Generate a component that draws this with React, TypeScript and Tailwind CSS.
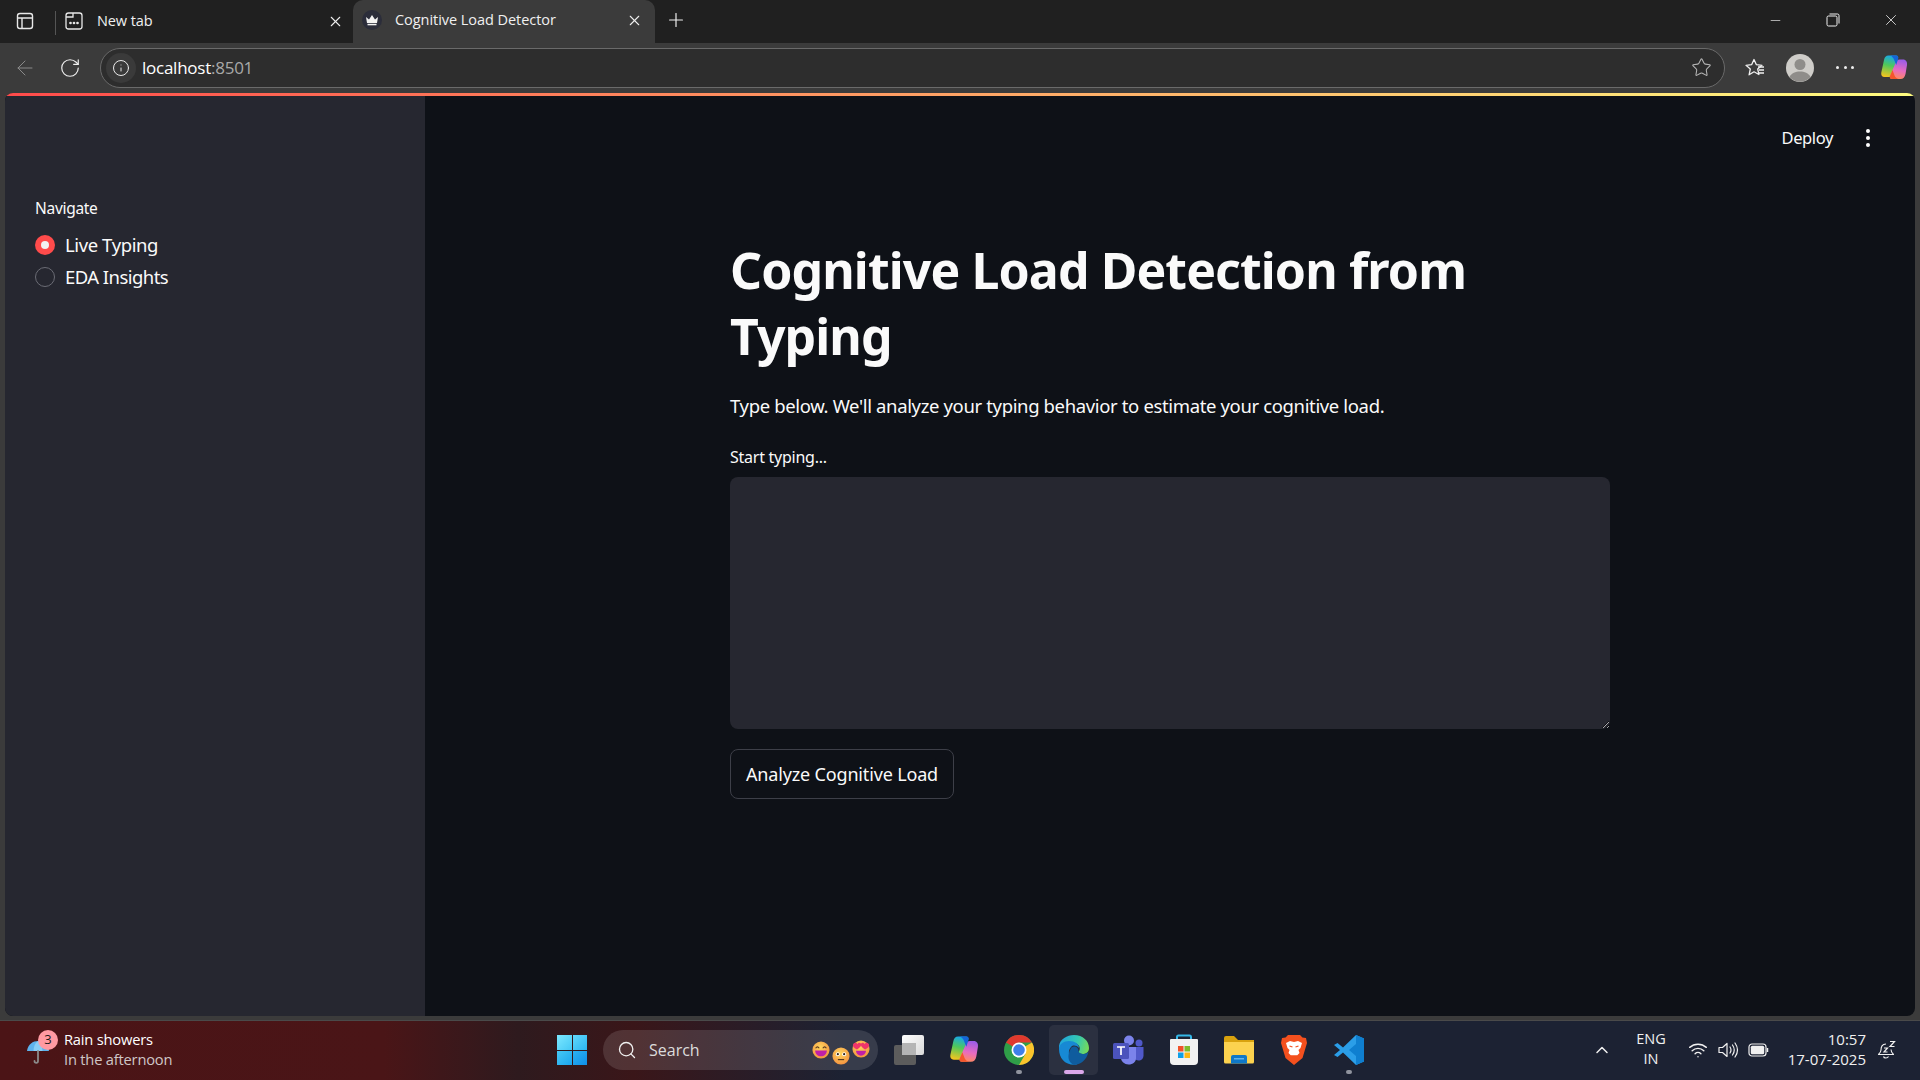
import { X, Plus, ArrowLeft, RotateCw, Info, Star, Minus, Search, ChevronUp, Wifi } from 'lucide-react'

const ui = 'font-["Open_Sans","Noto_Sans",sans-serif]'
const st = 'font-["Noto_Sans",sans-serif]'

function SidebarIcon() {
  return (
    <svg width="20" height="20" viewBox="0 0 20 20" fill="none" stroke="#e8e8e8" strokeWidth="1.4">
      <rect x="2.5" y="2.5" width="15" height="15" rx="2.5" />
      <path d="M2.5 7h15M7 7v10.5" />
    </svg>
  )
}

function NewTabIcon() {
  return (
    <svg width="20" height="20" viewBox="0 0 20 20" fill="none" stroke="#e8e8e8" strokeWidth="1.3">
      <path d="M4.5 2h11A2.5 2.5 0 0 1 18 4.500v11a2.500 2.500 0 0 1-2.500 2.500h-11A2.500 2.500 0 0 1 2 15.500v-11A2.500 2.500 0 0 1 4.500 2zM2 6h7V2" />
      <circle cx="6.500" cy="12" r=".7" fill="#e8e8e8" />
      <circle cx="10" cy="12" r=".7" fill="#e8e8e8" />
      <circle cx="13.500" cy="12" r=".7" fill="#e8e8e8" />
    </svg>
  )
}

function Crown() {
  return (
    <div className="flex h-[20px] w-[20px] items-center justify-center rounded-full bg-[#2b2d3a]">
      <svg width="14" height="12" viewBox="0 0 14 12" fill="#f2f2f2">
        <path d="M1 3l3 2.500L7 1l3 4.500L13 3l-1 6H2z" />
        <rect x="2.500" y="9.800" width="9" height="1.500" />
      </svg>
    </div>
  )
}

function Restore() {
  return (
    <svg width="14" height="14" viewBox="0 0 14 14" fill="none" stroke="#f0f0f0" strokeWidth="1">
      <rect x="1" y="3" width="10" height="10" rx="1.500" />
      <path d="M3.500 1H11.500A1.500 1.500 0 0 1 13 2.500V10.500" />
    </svg>
  )
}

function FavoritesIcon() {
  return (
    <svg width="22" height="20" viewBox="0 0 22 20" fill="none" stroke="#f0f0f0" strokeWidth="1.300" strokeLinejoin="round">
      <path d="M10 1.500l2.400 5.200 5.600.6-4.300 3.700 1.200 5.500L10 13.800l-4.900 3 1.200-5.800L2 7.300l5.600-.6z" />
      <path d="M14 9h6M15 12h5M14 15h6" />
    </svg>
  )
}

function Avatar() {
  return (
    <svg width="28" height="28" viewBox="0 0 28 28">
      <circle cx="14" cy="14" r="14" fill="#cfcdc9" />
      <circle cx="14" cy="10.500" r="5.500" fill="#8f8d8a" />
      <path d="M3.500 23c2-4 6-5.500 10.500-5.500S22.500 19 24.500 23a14 14 0 0 1-21 0z" fill="#8f8d8a" />
    </svg>
  )
}

function CopilotIcon({ size = 28, id = 'cp' }: { size?: number; id?: string }) {
  return (
    <svg width={size} height={size} viewBox="0 0 28 28">
      <defs>
        <linearGradient id={`${id}a`} x1="0.500" y1="0" x2="0.300" y2="1">
          <stop offset="0" stopColor="#18a8e8" />
          <stop offset="0.450" stopColor="#4fc85a" />
          <stop offset="1" stopColor="#f5c51e" />
        </linearGradient>
        <linearGradient id={`${id}b`} x1="0.600" y1="0" x2="0.400" y2="1">
          <stop offset="0" stopColor="#9a5ce8" />
          <stop offset="0.550" stopColor="#e86bc0" />
          <stop offset="1" stopColor="#ff8a5c" />
        </linearGradient>
      </defs>
      <path d="M8.500 1.500H16c2 0 2.500 1.500 2 3L13 20c-.7 2-2 3-4 3H4.500C2 23 .8 21 1.300 18.500L4 6c.6-3 2-4.500 4.500-4.500z" fill={`url(#${id}a)`} />
      <path d="M19.500 5.500h3.500c3 0 4.500 2.500 4 5.500l-1.500 9c-.6 3-2.300 5-5 5H12c-2 0-2.500-1.500-2-3l5.500-13c.8-2 2-3.500 4-3.500z" fill={`url(#${id}b)`} />
      <path d="M10.500 1.500H16c2 0 2.700 1.500 2.200 3l-2 6.500-2-5c-.7-2-2-3.500-3.700-4.500z" fill="#1565d8" />
      <path d="M18.500 25H12c-2 0-2.500-1.500-2-3l2.500-6 2 5.500c.7 1.800 2.300 3 4 3.500z" fill="#f4562c" />
    </svg>
  )
}

function Umbrella() {
  return (
    <svg width="24" height="30" viewBox="0 0 24 30" fill="none">
      <path d="M1 14C2 7 7 4 12 4s10 3 11 10z" fill="#5eb2ec" />
      <path d="M12 4c-3 2-4.500 6-4.500 10h9C16.500 10 15 6 12 4z" fill="#89cdf5" />
      <path d="M12 14v10c0 2.500-3.500 2.500-3.500 0" stroke="#8a8a8a" strokeWidth="1.800" strokeLinecap="round" />
    </svg>
  )
}

function WinLogo() {
  return (
    <div className="grid h-[30px] w-[30px] grid-cols-2 gap-[1px]">
      <div className="bg-[linear-gradient(135deg,#7ce8ff,#45c8f5)]" />
      <div className="bg-[linear-gradient(135deg,#62d8fb,#2bb5f2)]" />
      <div className="bg-[linear-gradient(135deg,#45c8f5,#1ba5ee)]" />
      <div className="bg-[linear-gradient(135deg,#2cb2f2,#0f8fe8)]" />
    </div>
  )
}

function Emoji({ kind, size }: { kind: 'grin' | 'flat' | 'love'; size: number }) {
  const id = 'em' + kind
  return (
    <svg width={size} height={size} viewBox="0 0 20 20">
      <defs>
        <radialGradient id={id} cx="0.450" cy="0.350" r="0.750">
          <stop offset="0" stopColor="#ffd65e" />
          <stop offset="1" stopColor="#f28a3c" />
        </radialGradient>
      </defs>
      <circle cx="10" cy="10" r="9.500" fill={`url(#${id})`} />
      {kind === 'grin' && (
        <>
          <path d="M4 8q2-3 4 0M12 8q2-3 4 0" fill="none" stroke="#5a3a20" strokeWidth="1.200" />
          <path d="M3.500 10.500h13c0 4-3 6.500-6.500 6.500s-6.500-2.500-6.500-6.500z" fill="#c020a8" />
        </>
      )}
      {kind === 'flat' && (
        <>
          <circle cx="6.500" cy="8" r="2.200" fill="#fff" />
          <circle cx="13.500" cy="8" r="2.200" fill="#fff" />
          <circle cx="6.500" cy="8" r="1.200" fill="#33261a" />
          <circle cx="13.500" cy="8" r="1.200" fill="#33261a" />
          <path d="M6.500 14h7" stroke="#5a3a20" strokeWidth="1.300" />
        </>
      )}
      {kind === 'love' && (
        <>
          <path d="M1 6c0-3 3.500-4 5-1.500C7.500 2 11 3 10 6c-.5 2-3 3.500-4.500 4.500C3.500 9.500 1 8 1 6z" fill="#f0356a" />
          <path d="M10 6c-1-3 2.500-4 4-1.500C15.500 2 19 3 19 6c0 2-2.500 3.500-4.500 4.500C13 9.500 10.500 8 10 6z" fill="#f0356a" />
          <path d="M4.500 12h11c0 3-2.500 5.500-5.500 5.500S4.500 15 4.500 12z" fill="#c020a8" />
        </>
      )}
    </svg>
  )
}

function TaskView() {
  return (
    <div className="relative h-[30px] w-[30px]">
      <div className="absolute bottom-0 left-0 h-[20px] w-[22px] rounded-[2px] bg-[#5c5c5c]" />
      <div className="absolute right-0 top-0 h-[20px] w-[22px] rounded-[2px] bg-[linear-gradient(135deg,#ffffff,#d9d9d9)]" />
      <div className="absolute left-[8px] top-[8px] h-[12px] w-[14px] bg-[#b5b5b5]" />
    </div>
  )
}

function ChromeIcon() {
  return (
    <svg width="30" height="30" viewBox="0 0 30 30">
      <circle cx="15" cy="15" r="15" fill="#2f9e48" />
      <path d="M15 15L2 7.500A15 15 0 0 1 28 7.500H15z" fill="#e0392e" />
      <path d="M15 15L28 7.500A15 15 0 0 1 15 30L21.500 18.700z" fill="#fbc42c" />
      <circle cx="15" cy="15" r="7.500" fill="#fff" />
      <circle cx="15" cy="15" r="5.800" fill="#3f7fe8" />
    </svg>
  )
}

function EdgeIcon() {
  return (
    <svg width="30" height="30" viewBox="0 0 30 30">
      <defs>
        <linearGradient id="edg" x1="0" y1="0.300" x2="1" y2="0.500">
          <stop offset="0" stopColor="#1fa4e0" />
          <stop offset="0.600" stopColor="#35c8b0" />
          <stop offset="1" stopColor="#74d95c" />
        </linearGradient>
      </defs>
      <path d="M15 0c9 0 15 6 15 13 0 4-3 6-6.500 6-2.500 0-4-1-4-2 0-.6 1.300-1 1.300-3.500C20.800 10 17.500 8 14 8 8 8 4 12.500 3 19 1 16 0 13 0 11 1 4 8 0 15 0z" fill="url(#edg)" />
      <path d="M0 14c0-5 5-8 10-8 6 0 10 3 10 7-3-3-6-3-8-1-3 3-3 9 1 13 1 1 3 3 5 4.500C7 31 0 24 0 14z" fill="#1789d4" />
      <path d="M12 13c3-3 7.500-1.500 7.500 3 0 2 3 3 5 3 2.500 0 4-1 5-2.500C28 25 21 30 15 30c-5-2-8-8-3-17z" fill="#0f5c9e" />
    </svg>
  )
}

function TeamsIcon() {
  return (
    <svg width="32" height="30" viewBox="0 0 32 30">
      <circle cx="16" cy="5.500" r="5" fill="#7b83eb" />
      <circle cx="26" cy="8" r="3.500" fill="#5059c9" />
      <path d="M21 12h9.500v8.500c0 3-2.200 5-5 5-2 0-3.500-1-4.500-2.500z" fill="#5059c9" />
      <path d="M8 12h15v11c0 4-3 6.500-7.500 6.500-4 0-7.500-3-7.500-6.500z" fill="#7b83eb" />
      <rect x="0" y="8" width="16" height="16" rx="1.500" fill="#4b53bc" />
      <path d="M4 12h8M8 12v8" stroke="#fff" strokeWidth="1.700" />
    </svg>
  )
}

function StoreIcon() {
  return (
    <svg width="30" height="32" viewBox="0 0 30 32">
      <path d="M8 7V3a1.500 1.500 0 0 1 1.500-1.500h11A1.500 1.500 0 0 1 22 3v4" fill="none" stroke="#35b8e8" strokeWidth="2" />
      <path d="M2 5h26a1 1 0 0 1 1 1v21a4 4 0 0 1-4 4H5a4 4 0 0 1-4-4V6a1 1 0 0 1 1-1z" fill="#f2f2f2" />
      <rect x="9" y="12" width="5.500" height="5.500" fill="#f0512a" />
      <rect x="15.500" y="12" width="5.500" height="5.500" fill="#7dbb2c" />
      <rect x="9" y="18.500" width="5.500" height="5.500" fill="#0f9fe8" />
      <rect x="15.500" y="18.500" width="5.500" height="5.500" fill="#fdb714" />
    </svg>
  )
}

function FolderIcon() {
  return (
    <svg width="30" height="28" viewBox="0 0 30 28">
      <path d="M0 2a2 2 0 0 1 2-2h8l4 4h16v6H0z" fill="#d9a20e" />
      <path d="M0 6h30v20a1.500 1.500 0 0 1-1.500 1.500h-27A1.500 1.500 0 0 1 0 26z" fill="#fcd24f" />
      <path d="M7 27.500V21a2 2 0 0 1 2-2h12a2 2 0 0 1 2 2v6.500z" fill="#0f78c8" />
      <rect x="10" y="22" width="10" height="1.500" fill="#63b4ea" />
    </svg>
  )
}

function BraveIcon() {
  return (
    <svg width="26" height="30" viewBox="0 0 26 30">
      <path d="M7 0h12l2.500 2.500L25 3l1 5-1.500 5-3 10L13 30 4.500 23l-3-10L0 8l1-5 3.500-.5z" fill="#f4501e" />
      <path d="M5 8l4-2 4 1 4-1 4 2-1.500 5-2 2 1 3-3 3h-5l-3-3 1-3-2-2z" fill="#fff" />
      <path d="M8.500 11l3 1M17.500 11l-3 1M11 21l2 2 2-2z" stroke="#f4501e" strokeWidth="1.300" fill="#f4501e" />
    </svg>
  )
}

function VsCodeIcon() {
  return (
    <svg width="30" height="30" viewBox="0 0 30 30">
      <path d="M22 0l8 3.500v23L22 30 9 17.500l-5.500 4.500L0 20l6-5-6-5 3.500-2L9 12.500z" fill="#2b9ee8" />
      <path d="M22 0l8 3.500v23L22 30V21l-7-6 7-6z" fill="#0f7fd0" />
    </svg>
  )
}

function Volume() {
  return (
    <svg width="21" height="18" viewBox="0 0 21 18" fill="none" stroke="#f0f0f0" strokeWidth="1.200">
      <path d="M1 6.500h3.500L9 2.500v13l-4.500-4H1z" strokeLinejoin="round" />
      <path d="M12 6q2 3 0 6M14.500 4q3.500 5 0 10M17 2q5 7 0 14" strokeLinecap="round" />
    </svg>
  )
}

function Battery() {
  return (
    <svg width="21" height="14" viewBox="0 0 21 14" fill="none">
      <rect x="1" y="1" width="17" height="12" rx="3" stroke="#f0f0f0" strokeWidth="1.200" />
      <rect x="2.800" y="2.800" width="13.400" height="8.400" rx="1.500" fill="#f0f0f0" />
      <path d="M19.500 5v4" stroke="#f0f0f0" strokeWidth="1.500" />
    </svg>
  )
}

function Bell() {
  return (
    <svg width="20" height="20" viewBox="0 0 20 20" fill="none" stroke="#f0f0f0" strokeWidth="1.100">
      <path d="M9 4C5 4 4 7 4 10c0 2-1 3-2.500 4.500h15C15 13 14 12 14 9.500M6.500 16.500c.5 2 4 2 5 0" strokeLinejoin="round" />
      <path d="M7 8h3.500L7 12h3.500M13 1.500h4.500L13 6.500h4.500" strokeWidth="1.200" />
    </svg>
  )
}

const apps = [
  { key: 'task', icon: <TaskView /> },
  { key: 'copilot', icon: <CopilotIcon size={30} id="cpt" /> },
  { key: 'chrome', icon: <ChromeIcon />, dot: 'run' },
  { key: 'edge', icon: <EdgeIcon />, dot: 'active' },
  { key: 'teams', icon: <TeamsIcon /> },
  { key: 'store', icon: <StoreIcon /> },
  { key: 'folder', icon: <FolderIcon /> },
  { key: 'brave', icon: <BraveIcon /> },
  { key: 'vscode', icon: <VsCodeIcon />, dot: 'run' },
]

export default function App() {
  return (
    <div className={`flex h-screen w-full flex-col overflow-hidden bg-[#3b3b3b] text-white ${ui}`}>
      {/* Tab strip */}
      <div className="flex h-[43px] shrink-0 items-end bg-[#202020]">
        <div className="flex h-[40px] w-[40px] items-center justify-end pr-[5px] pb-[4px]">
          <SidebarIcon />
        </div>
        <div className="mb-[8px] ml-[15px] h-[24px] w-px bg-[#555]" />
        <div className="flex h-[40px] w-[297px] items-center pb-[4px] pl-[8px]">
          <NewTabIcon />
          <span className="ml-[13px] text-[14.500px] tracking-[-0.1px] text-[#f0f0f0]">New tab</span>
          <X size={17} strokeWidth={1.500} className="ml-auto mr-[9px] text-[#eee]" />
        </div>
        <div className="flex h-[43px] w-[302px] items-center rounded-t-[10px] bg-[#3b3b3b] pb-[3px] pl-[9px]">
          <Crown />
          <span className="ml-[13px] text-[14.500px] tracking-[-0.05px] text-[#f0f0f0]">Cognitive Load Detector</span>
          <X size={17} strokeWidth={1.500} className="ml-auto mr-[12px] text-[#eee]" />
        </div>
        <Plus size={22} strokeWidth={1.300} className="mb-[12px] ml-[10px] text-[#eee]" />
        <div className="ml-auto flex h-[40px] items-center self-start">
          <div className="flex w-[58px] justify-center"><Minus size={15} strokeWidth={1} /></div>
          <div className="flex w-[58px] justify-center"><Restore /></div>
          <div className="flex w-[58px] justify-center"><X size={18} strokeWidth={1} /></div>
        </div>
      </div>

      {/* Toolbar */}
      <div className="flex h-[50px] shrink-0 items-center pb-[1px]">
        <ArrowLeft size={24} strokeWidth={1} className="ml-[13px] text-[#8a8a8a]" />
        <RotateCw size={22} strokeWidth={1.300} className="ml-[22px] text-[#eee]" />
        <div className="ml-[19px] flex h-[40px] w-[1625px] items-center rounded-[20px] border border-[#6a6a6a] bg-[#2d2d2d] pl-[5px]">
          <div className="flex h-[30px] w-[30px] items-center justify-center rounded-full bg-[#3a3a3a]">
            <Info size={18} strokeWidth={1.300} className="text-[#eee]" />
          </div>
          <span className="ml-[6px] text-[17px] tracking-[-0.25px] text-white">
            localhost<span className="text-[#a8a8a8]">:8501</span>
          </span>
          <Star size={21} strokeWidth={1.200} className="ml-auto mr-[12px] text-[#b5b5b5]" />
        </div>
        <div className="ml-[19px] flex w-[22px] justify-center"><FavoritesIcon /></div>
        <div className="ml-[20px]"><Avatar /></div>
        <div className="ml-[22px] flex w-[18px] justify-between">
          <span className="h-[3px] w-[3px] rounded-full bg-[#eee]" />
          <span className="h-[3px] w-[3px] rounded-full bg-[#eee]" />
          <span className="h-[3px] w-[3px] rounded-full bg-[#eee]" />
        </div>
        <div className="ml-[26px]"><CopilotIcon /></div>
      </div>

      {/* Streamlit page */}
      <div className="mx-[5px] flex min-h-0 flex-1 flex-col overflow-hidden rounded-[8px] bg-[#0e1117]">
        <div className="h-[3px] shrink-0 bg-[linear-gradient(90deg,#ff4b4b,#fffd80)]" />
        <div className={`flex min-h-0 flex-1 ${st}`}>
          <aside className="w-[420px] shrink-0 bg-[#262730] pl-[30px] pt-[102px]">
            <p className="text-[15.500px] leading-[20px] tracking-[-0.3px] text-[#fafafa]">Navigate</p>
            <div className="mt-[11px] flex h-[32px] items-center">
              <span className="flex h-[20px] w-[20px] items-center justify-center rounded-full bg-[#ff4b4b]">
                <span className="h-[8px] w-[8px] rounded-full bg-[#f2f2f2]" />
              </span>
              <span className="ml-[10px] text-[18.500px] tracking-[-0.4px] text-[#fafafa]">Live Typing</span>
            </div>
            <div className="flex h-[32px] items-center">
              <span className="h-[20px] w-[20px] rounded-full border border-[#6b6c75]" />
              <span className="ml-[10px] text-[18.500px] tracking-[-0.55px] text-[#fafafa]">EDA Insights</span>
            </div>
          </aside>

          <main className="relative min-w-0 flex-1">
            <div className="absolute right-[45px] top-[30px] flex items-center">
              <span className="text-[16.500px] tracking-[-0.4px] text-[#fafafa]">Deploy</span>
              <div className="ml-[33px] flex flex-col gap-[3px]">
                <span className="h-[4px] w-[4px] rounded-full bg-white" />
                <span className="h-[4px] w-[4px] rounded-full bg-white" />
                <span className="h-[4px] w-[4px] rounded-full bg-white" />
              </div>
            </div>
            <div className="ml-[305px] w-[880px] pt-[141px]">
              <h1 className="text-[50px] font-bold leading-[66px] tracking-[-0.9px] text-[#fafafa]">
                Cognitive Load Detection from Typing
              </h1>
              <p className="mt-[23px] text-[18.500px] leading-[28px] tracking-[-0.36px] text-[#fafafa]">
                Type below. We'll analyze your typing behavior to estimate your cognitive load.
              </p>
              <p className="mt-[27px] text-[16px] leading-[20px] tracking-[-0.25px] text-[#fafafa]">Start typing...</p>
              <textarea
                className="mt-[10px] block h-[252px] w-full rounded-[8px] bg-[#262730] outline-none"
                aria-label="Start typing..."
              />
              <button className="mt-[20px] h-[50px] w-[224px] rounded-[8px] border border-[#3d3f48] bg-[#0e1117] text-[18px] tracking-[-0.16px] text-[#fafafa]">
                Analyze Cognitive Load
              </button>
            </div>
          </main>
        </div>
      </div>

      {/* Windows taskbar */}
      <div className="mt-[4px] flex h-[60px] shrink-0 items-center border-t border-[#4a4a4a] bg-[linear-gradient(90deg,#4b1416_0%,#4a1517_20%,#2e1a1e_27%,#3a1619_33%,#1c2233_44%,#1c2233_100%)] pb-[1px]">
        <div className="relative ml-[26px] h-[34px] w-[30px] shrink-0">
          <div className="absolute bottom-0 left-0"><Umbrella /></div>
          <span className="absolute -top-[3px] left-[12px] flex h-[20px] w-[20px] items-center justify-center rounded-full bg-[#ff9aa2] text-[13px] text-[#1c1c1c]">3</span>
        </div>
        <div className="ml-[8px] w-[170px] shrink-0 pb-[2px] text-[14.700px] leading-[20px] tracking-[-0.2px]">
          <p className="text-white">Rain showers</p>
          <p className="text-[#cfc6c6]">In the afternoon</p>
        </div>
        <div className="ml-[323px] shrink-0"><WinLogo /></div>
        <div className="ml-[16px] flex h-[40px] w-[275px] shrink-0 items-center rounded-[20px] bg-[#ffffff1f] pl-[14px] pr-[8px]">
          <Search size={20} strokeWidth={1.600} className="text-[#f0f0f0]" />
          <span className="ml-[12px] text-[16px] text-[#dcdcdc]">Search</span>
          <div className="relative ml-auto h-[30px] w-[58px]">
            <div className="absolute left-0 top-[6px]"><Emoji kind="grin" size={18} /></div>
            <div className="absolute left-[20px] top-[12px]"><Emoji kind="flat" size={18} /></div>
            <div className="absolute left-[40px] top-[5px]"><Emoji kind="love" size={18} /></div>
          </div>
        </div>
        <div className="ml-[3px] flex shrink-0 items-center">
          {apps.map((a) => (
            <div key={a.key} className="relative flex h-[50px] w-[55px] items-center justify-center">
              {a.dot === 'active' && <span className="absolute inset-y-0 left-[3px] right-[3px] rounded-[5px] bg-[#2b3040]" />}
              <span className="relative flex">{a.icon}</span>
              {a.dot === 'run' && <span className="absolute bottom-[1px] h-[4px] w-[6px] rounded-full bg-[#8f939e]" />}
              {a.dot === 'active' && <span className="absolute bottom-[1px] h-[4px] w-[20px] rounded-full bg-[#dba8ea]" />}
            </div>
          ))}
        </div>
        <ChevronUp size={20} strokeWidth={1.800} className="ml-[216px] shrink-0 text-[#f0f0f0]" />
        <div className="ml-[20px] w-[38px] shrink-0 pb-[2px] text-center text-[14.500px] leading-[20px] text-[#f0f0f0]">
          <p>ENG</p>
          <p>IN</p>
        </div>
        <Wifi size={20} strokeWidth={1.700} className="ml-[18px] shrink-0 text-[#f0f0f0]" />
        <div className="ml-[10px] shrink-0"><Volume /></div>
        <div className="ml-[9px] shrink-0"><Battery /></div>
        <div className="ml-[14px] w-[83px] shrink-0 pb-[2px] text-right text-[15px] leading-[20px] text-[#f0f0f0]">
          <p>10:57</p>
          <p className="whitespace-nowrap">17-07-2025</p>
        </div>
        <div className="ml-[11px] shrink-0"><Bell /></div>
      </div>
    </div>
  )
}
